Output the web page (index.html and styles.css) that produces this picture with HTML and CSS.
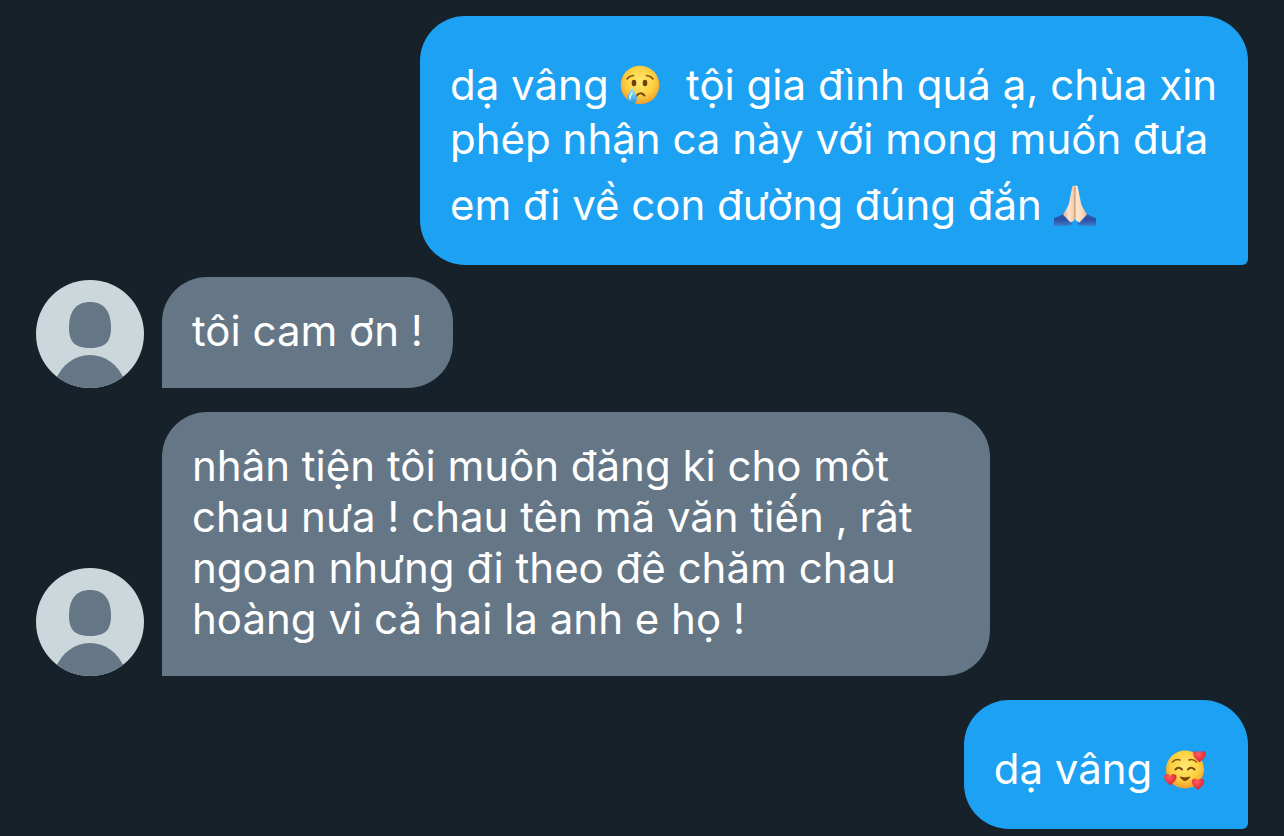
FILE: index.html
```html
<!DOCTYPE html>
<html lang="vi">
<head>
  <meta charset="UTF-8">
  <meta name="viewport" content="width=device-width, initial-scale=1.0">
  <title>Tin nhắn</title>
  <link rel="stylesheet" href="styles.css">
</head>
<body>
  <!-- shared drawings -->
  <svg class="defs" aria-hidden="true">
    <defs>
      <radialGradient id="face" cx="0.5" cy="0.4" r="0.62">
        <stop offset="0" stop-color="#ffe970"/>
        <stop offset="0.6" stop-color="#fdd03f"/>
        <stop offset="1" stop-color="#f0962a"/>
      </radialGradient>
      <linearGradient id="tear" x1="0" y1="0" x2="0" y2="1">
        <stop offset="0" stop-color="#b5ecff"/>
        <stop offset="1" stop-color="#1d97dc"/>
      </linearGradient>
      <linearGradient id="skin-left" x1="0" y1="0" x2="1" y2="0">
        <stop offset="0" stop-color="#e2b08c"/>
        <stop offset="0.5" stop-color="#fde3cc"/>
        <stop offset="1" stop-color="#f0c3a0"/>
      </linearGradient>
      <linearGradient id="skin-right" x1="0" y1="0" x2="1" y2="0">
        <stop offset="0" stop-color="#fde8d4"/>
        <stop offset="0.6" stop-color="#fbd9bd"/>
        <stop offset="1" stop-color="#e9b994"/>
      </linearGradient>
      <linearGradient id="sleeve" x1="0" y1="0" x2="0" y2="1">
        <stop offset="0" stop-color="#2c5cb4"/>
        <stop offset="0.5" stop-color="#2b51a4"/>
        <stop offset="1" stop-color="#3b7fcd"/>
      </linearGradient>
      <radialGradient id="love" cx="0.4" cy="0.3" r="0.7">
        <stop offset="0" stop-color="#ff5d62"/>
        <stop offset="1" stop-color="#d9202f"/>
      </radialGradient>
      <path id="heart" d="M0 6.4C-3.4 3.8-6.4 1-6.2-2.2C-6-5.4-1.6-6.2 0-2.8C1.6-6.2 6-5.4 6.2-2.2C6.4 1 3.4 3.8 0 6.4Z" fill="url(#love)"/>
      <clipPath id="round"><circle cx="54" cy="54" r="54"/></clipPath>
      <symbol id="person" viewBox="0 0 108 108">
        <circle cx="54" cy="54" r="54" fill="#ccd7dc"/>
        <path d="M54 22C67 22 75 30 75 48C75 62 69 68 54 68C39 68 33 62 33 48C33 30 41 22 54 22Z" fill="#657786"/>
        <path clip-path="url(#round)" d="M19 101C26 84 39 75 54 75C69 75 82 84 89 101V108H19Z" fill="#657786"/>
      </symbol>
    </defs>
  </svg>

  <main class="chat">
    <div class="row sent">
      <p class="bubble">dạ vâng <svg class="emoji" viewBox="0 0 42 42" role="img" aria-label="😢">
        <circle cx="20" cy="20" r="19.3" fill="url(#face)"/>
        <path d="M7 14Q9 11 13.5 10.5M26.5 10.5Q31 11 33 14" fill="none" stroke="#8a5212" stroke-width="1.6" stroke-linecap="round"/>
        <ellipse cx="14" cy="18" rx="2.3" ry="3.3" fill="#6b400f"/>
        <ellipse cx="25" cy="18" rx="2.3" ry="3.3" fill="#6b400f"/>
        <path d="M16.5 31Q20 26 24.5 30.5" fill="none" stroke="#754511" stroke-width="2" stroke-linecap="round"/>
        <path d="M12 22C14 27 17 29.8 17 33.6C17 37 14.8 39 12 39C9 39 7 36.8 7 33.6C7 29.8 10.5 27 12 22Z" fill="url(#tear)"/>
        <path d="M12 28Q9.5 31 10 34" fill="none" stroke="#e4faff" stroke-width="1.4" stroke-linecap="round"/>
      </svg>&nbsp; tội gia đình quá ạ, chùa xin phép nhận ca này với mong muốn đưa em đi về con đường đúng đắn <svg class="emoji" viewBox="0 0 42 42" role="img" aria-label="🙏🏻">
        <path d="M0 33Q6 31.5 9.5 28.5L19 39Q16 40 14 41H0Z" fill="url(#sleeve)"/>
        <path d="M42 33Q36 31.5 32.5 28.5L23 39Q26 40 28 41H42Z" fill="url(#sleeve)"/>
        <path d="M21 1Q18.4-.4 18 3L15.8 14Q15.4 19 13 23L9 29.5L16.5 37.5Q21 36 21 32Z" fill="url(#skin-left)"/>
        <path d="M21 1Q23.6-.4 24 3L26.2 14Q26.6 19 29 23L33 29.5L25.5 37.5Q21 36 21 32Z" fill="url(#skin-right)"/>
        <path d="M21 2V33" stroke="#c08a63" stroke-width="1"/>
      </svg></p>
    </div>

    <div class="row received first">
      <svg class="avatar" role="img" aria-label="Ảnh đại diện"><use href="#person"/></svg>
      <p class="bubble">tôi cam ơn !</p>
    </div>

    <div class="row received">
      <svg class="avatar" role="img" aria-label="Ảnh đại diện"><use href="#person"/></svg>
      <p class="bubble">nhân tiện tôi muôn đăng ki cho môt chau nưa ! chau tên mã văn tiến , rât ngoan nhưng đi theo đê chăm chau hoàng vi cả hai la anh e họ !</p>
    </div>

    <div class="row sent">
      <p class="bubble">dạ vâng <svg class="emoji" viewBox="0 0 42 42" role="img" aria-label="🥰">
        <circle cx="21" cy="20.5" r="19" fill="url(#face)"/>
        <path d="M8.5 13Q11.5 9.5 16 11M25 11Q29 9.5 32.5 13" fill="none" stroke="#8a5212" stroke-width="1.6" stroke-linecap="round"/>
        <path d="M11.5 20.5Q14.5 17 18 20.5M24 20.5Q27 17 30.5 20.5" fill="none" stroke="#754511" stroke-width="2" stroke-linecap="round"/>
        <path d="M16 28Q21 35 26 28Q21 30 16 28Z" fill="#754511" stroke="#754511" stroke-linejoin="round"/>
        <use href="#heart" x="35.5" y="7"/>
        <use href="#heart" x="6.3" y="30"/>
        <use href="#heart" x="34" y="34.5"/>
      </svg>&nbsp;</p>
    </div>
  </main>
</body>
</html>
```

FILE: styles.css
```css
* {
  box-sizing: border-box;
}
body {
  margin: 0;
  background: #17212a;
  color: #fff;
  font-family: Inter, "Noto Sans", sans-serif;
  font-size: 42px;
  line-height: 51px;
}
.defs {
  position: absolute;
  width: 0;
  height: 0;
}
.chat {
  display: flex;
  flex-direction: column;
  gap: 24px;
  padding: 16px 36px 7px;
}
.row {
  display: flex;
  align-items: flex-end;
  gap: 18px;
}
.sent {
  justify-content: flex-end;
}
/* the first reply sits closer to the message above */
.first {
  margin-top: -12px;
}
.bubble {
  max-width: 828px;
  margin: 0;
  padding: 28px 30px 32px;
  border-radius: 45px;
}
.sent .bubble {
  background: #1da1f2;
  border-bottom-right-radius: 6px;
}
.received .bubble {
  background: #657786;
  border-bottom-left-radius: 0;
}
.avatar {
  flex: none;
  width: 108px;
  height: 108px;
}
/* margins make a line with an emoji taller than a plain one */
.emoji {
  width: 42px;
  height: 42px;
  margin: 21px 0 6px;
  vertical-align: -13px;
}
```
